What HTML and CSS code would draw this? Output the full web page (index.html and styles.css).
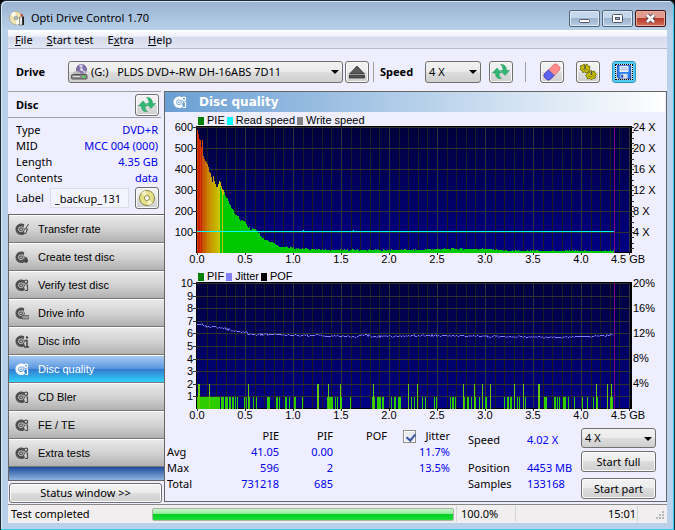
FILE: index.html
```
<!DOCTYPE html>
<html lang="en">
  <head>
    <meta charset="UTF-8" />
    <meta name="viewport" content="width=device-width, initial-scale=1.0" />
    <title>Opti Drive Control 1.70</title>
    <link rel="stylesheet" href="styles.css" />
  </head>

  <body>
    <!-- Shared icons -->
    <svg class="sprite" aria-hidden="true">
      <symbol id="disc" viewBox="0 0 14 14">
        <path fill="currentColor" fill-rule="evenodd" d="M6.500 1.500C3 1.500.5 4 .5 7.300S3 13 6.300 13c1.500 0 2.700-.4 3.700-1.300L9 9.500l1-2.300-1.500-2L9.300 2.200A6 6 0 0 0 6.500 1.500zM6 4.600a2.700 2.700 0 1 1 0 5.400 2.700 2.700 0 0 1 0-5.400z" />
        <circle cx="6" cy="7.300" r="1.400" fill="none" stroke="currentColor" stroke-width="1.100" />
      </symbol>
      <symbol id="disc-gear" viewBox="0 0 14 14">
        <use href="#disc" />
        <circle cx="11" cy="3.800" r="1.700" fill="none" stroke="currentColor" stroke-width="1.300" />
        <path d="M10.500 7h2v5.500H10" fill="none" stroke="currentColor" stroke-width="1.200" />
      </symbol>
      <symbol id="refresh" viewBox="0 0 18 18">
        <path d="M.5 10L5 5l4.500 5H7c0 3 .6 4.200 2.500 5.500-4 .6-6-1.200-6-5.500z" fill="#31b872" stroke="#1d9257" stroke-width=".5" />
        <path d="M17.500 7.500L13 12.500 8.500 7.500H11c0-3-.8-4.500-2.500-5.900 3.600-.3 6 1.600 6 5.900z" fill="#31b872" stroke="#1d9257" stroke-width=".5" />
      </symbol>
    </svg>

    <div class="window">
      <header class="titlebar">
        <svg class="app-icon" viewBox="0 0 16 16" aria-hidden="true">
          <circle cx="7" cy="8" r="6.500" fill="#efe3b4" stroke="#a99c78" stroke-width=".7" />
          <path d="M7 8L1.500 4.500A6.500 6.500 0 0 1 6 1.600zM7 8l5.500 3.500A6.500 6.500 0 0 1 7 14.500z" fill="#fffdf2" />
          <circle cx="7" cy="8" r="1.800" fill="#a9c3df" stroke="#8a8266" stroke-width=".7" />
          <path d="M10.500 7h3v8h-3z" fill="#e9e9e9" stroke="#555" stroke-width=".6" />
          <path d="M13.200 6.500h1.800V15h-1.800z" fill="#222" />
          <path d="M12 3.500l2 1.500-1 2-1.500-1.500z" fill="#c23a2a" />
        </svg>
        <h1>Opti Drive Control 1.70</h1>
        <div class="caption-buttons">
          <button class="caption" aria-label="Minimize">
            <svg viewBox="0 0 28 15"><rect x="9.500" y="8.500" width="10" height="3" rx="1" fill="#fff" stroke="#535666" /></svg>
          </button>
          <button class="caption" aria-label="Maximize">
            <svg viewBox="0 0 28 15">
              <rect x="9.500" y="3.500" width="10" height="8" rx="1" fill="#fff" stroke="#535666" />
              <rect x="12.500" y="6.500" width="4" height="2" fill="#9db6d2" stroke="#535666" />
            </svg>
          </button>
          <button class="caption close" aria-label="Close">
            <svg viewBox="0 0 28 15">
              <path d="M11 4l7 7M18 4l-7 7" stroke="#5a4652" stroke-width="4.500" />
              <path d="M11 4l7 7M18 4l-7 7" stroke="#fff" stroke-width="2.600" />
            </svg>
          </button>
        </div>
      </header>

      <div class="client">
        <nav class="menubar">
          <a href="#file"><u>F</u>ile</a>
          <a href="#start"><u>S</u>tart test</a>
          <a href="#extra">E<u>x</u>tra</a>
          <a href="#help"><u>H</u>elp</a>
        </nav>

        <div class="toolbar">
          <label class="bold drive-label" for="drive">Drive</label>
          <span class="select drive-select">
            <svg class="drive-icon" viewBox="0 0 17 16" aria-hidden="true">
              <circle cx="10.500" cy="5.500" r="5" fill="#8474ad" stroke="#54477c" stroke-width=".7" />
              <path d="M10.500 5.500L8 1.200A5 5 0 0 1 12 .8zM10.500 5.500l4.500 2-1.500 2z" fill="#d3cbea" />
              <circle cx="10.500" cy="5.500" r="1.300" fill="#eee" />
              <path d="M3 7.500h5l2 2h4l2 1.500H1z" fill="#b9b9b9" />
              <rect x=".5" y="10.500" width="15.500" height="4.500" rx="1" fill="#8a8a8a" stroke="#555" />
              <path d="M2 12.500h7" stroke="#ddd" />
              <circle cx="12.800" cy="12.700" r="1.200" fill="#3bf03b" />
            </svg>
            <select id="drive">
              <option>(G:) &nbsp; PLDS DVD+-RW DH-16ABS 7D11</option>
            </select>
          </span>
          <button class="btn icon-btn" aria-label="Eject">
            <svg viewBox="0 0 18 16">
              <path d="M9 2l7.500 8h-15z" fill="#5a5a5a" stroke="#222" stroke-width=".7" />
              <rect x="1.500" y="11.500" width="15" height="2.500" fill="#555" stroke="#222" stroke-width=".7" />
            </svg>
          </button>
          <span class="separator"></span>
          <label class="bold speed-label" for="speed">Speed</label>
          <span class="select speed-select">
            <select id="speed">
              <option>4 X</option>
            </select>
          </span>
          <button class="btn icon-btn" aria-label="Refresh speed"><svg viewBox="0 0 18 18"><use href="#refresh" /></svg></button>
          <span class="separator wide"></span>
          <div class="tools">
            <button class="btn icon-btn" aria-label="Erase">
              <svg viewBox="0 0 18 18">
                <g transform="rotate(-45 9 9)">
                  <rect x="0" y="5" width="18" height="8" rx="3" fill="#ff8d8d" stroke="#d65a5a" stroke-width=".7" />
                  <path d="M3 5h5v8H3a3 3 0 0 1-3-3V8a3 3 0 0 1 3-3z" fill="#5d63f0" stroke="#3538b8" stroke-width=".7" />
                </g>
              </svg>
            </button>
            <button class="btn icon-btn" aria-label="Settings">
              <svg viewBox="0 0 18 18">
                <g fill="#c6bd00" stroke="#665f00" stroke-width=".8">
                  <path d="M5 1l1.500 1 1.500-1 1 2 2 .5-.5 2 .5 2.500-2 .5L7.500 10 5.500 9l-2 .5-.5-2L1 6.500 2 4.500 1 3l2-.5z" />
                  <path d="M12 7.500l1.500 1 2-.5.5 2 1.500 1.500-1.500 1.500.5 2-2.500.5-1.500 1.500-1.500-1.500-2.500.5-.5-2L6.500 12.500 8 11l.5-2 2 .5z" />
                </g>
                <path d="M6 2v4M12.500 8.500v3.500" stroke="#555" stroke-width="1.500" />
                <path d="M3.500 6q2.500 2.500 5 0M9.500 13q2.500 2 5-.5" fill="none" stroke="#8b8400" />
              </svg>
            </button>
            <button class="btn icon-btn focused" aria-label="Save">
              <svg viewBox="0 0 18 18">
                <path d="M1.500 1.500h15v15h-13l-2-2z" fill="#2d80ee" stroke="#1247b5" />
                <rect x="4" y="2" width="10" height="7" fill="#e8f0ff" />
                <path d="M5 4.500h8M5 6.500h8" stroke="#9fb5dd" />
                <rect x="5" y="11" width="8" height="5.500" fill="#d9dde5" />
                <rect x="6" y="12" width="2" height="3.500" fill="#1247b5" />
              </svg>
            </button>
          </div>
        </div>

        <div class="workspace">
          <aside class="sidebar">
            <div class="disc-head">
              <h2>Disc</h2>
              <button class="btn icon-btn" aria-label="Refresh disc"><svg viewBox="0 0 18 18"><use href="#refresh" /></svg></button>
            </div>
            <dl class="disc-info">
              <div><dt>Type</dt><dd>DVD+R</dd></div>
              <div><dt>MID</dt><dd>MCC 004 (000)</dd></div>
              <div><dt>Length</dt><dd>4.35 GB</dd></div>
              <div><dt>Contents</dt><dd>data</dd></div>
            </dl>
            <div class="label-row">
              <label for="disc-label">Label</label>
              <input id="disc-label" type="text" value="_backup_131" />
              <button class="btn icon-btn" aria-label="Edit label">
                <svg viewBox="0 0 18 18">
                  <circle cx="9" cy="9" r="7.500" fill="#e6e08a" stroke="#8d8842" />
                  <path d="M9 9L3.500 4A7.500 7.500 0 0 1 8 1.800zM9 9l5.500 5a7.500 7.500 0 0 1-4.500 2.300z" fill="#f8f6cc" />
                  <circle cx="9" cy="9" r="2.500" fill="#fff" stroke="#8d8842" />
                </svg>
              </button>
            </div>
            <nav class="tests">
              <button class="test"><svg viewBox="0 0 14 14"><use href="#disc" /><path d="M13.500 2l-3 5h2l-2 5" fill="none" stroke="#444" /></svg>Transfer rate</button>
              <button class="test"><svg viewBox="0 0 14 14"><use href="#disc" /><path d="M11 6.500q4 5 0 6.500-4-1.500 0-6.500z" fill="#444" /></svg>Create test disc</button>
              <button class="test"><svg viewBox="0 0 14 14"><use href="#disc-gear" /></svg>Verify test disc</button>
              <button class="test"><svg viewBox="0 0 14 14"><use href="#disc" /><path d="M7 9.500h7v3.500H7z" fill="#999" stroke="#555" stroke-width=".7" /></svg>Drive info</button>
              <button class="test"><svg viewBox="0 0 14 14"><use href="#disc" /><path d="M9.500 6.500h2.500v6M9 13h5" fill="none" stroke="#444" stroke-width="1.500" /><circle cx="12" cy="3.500" r="1.200" fill="#444" /></svg>Disc info</button>
              <button class="test active"><svg viewBox="0 0 14 14"><use href="#disc-gear" /></svg>Disc quality</button>
              <button class="test"><svg viewBox="0 0 14 14"><use href="#disc-gear" /></svg>CD Bler</button>
              <button class="test"><svg viewBox="0 0 14 14"><use href="#disc-gear" /></svg>FE / TE</button>
              <button class="test"><svg viewBox="0 0 14 14"><use href="#disc-gear" /></svg>Extra tests</button>
            </nav>
            <button class="btn status-window">Status window &gt;&gt;</button>
          </aside>

          <main class="panel">
            <div class="panel-head">
              <svg viewBox="0 0 14 14" aria-hidden="true"><use href="#disc-gear" /></svg>
              <h2>Disc quality</h2>
            </div>

            <ul class="legend">
              <li><i class="key green"></i>PIE</li>
              <li><i class="key cyan"></i>Read speed</li>
              <li><i class="key gray"></i>Write speed</li>
            </ul>
            <svg class="chart" id="pie-chart" viewBox="0 0 501 142" role="img" aria-label="PIE errors and read speed"></svg>

            <ul class="legend">
              <li><i class="key green"></i>PIF</li>
              <li><i class="key violet"></i>Jitter</li>
              <li><i class="key black"></i>POF</li>
            </ul>
            <svg class="chart" id="pif-chart" viewBox="0 0 501 142" role="img" aria-label="PIF errors and jitter"></svg>

            <div class="results">
              <table class="stats">
                <thead>
                  <tr>
                    <td></td>
                    <th>PIE</th>
                    <th>PIF</th>
                    <th>POF</th>
                    <th>
                      <span class="jitter"><input type="checkbox" id="jitter" checked /><label for="jitter">Jitter</label></span>
                    </th>
                  </tr>
                </thead>
                <tbody>
                  <tr><th>Avg</th><td>41.05</td><td>0.00</td><td></td><td>11.7%</td></tr>
                  <tr><th>Max</th><td>596</td><td>2</td><td></td><td>13.5%</td></tr>
                  <tr><th>Total</th><td>731218</td><td>685</td><td></td><td></td></tr>
                </tbody>
              </table>
              <dl class="progress-info">
                <dt>Speed</dt><dd>4.02 X</dd>
                <dt>Position</dt><dd>4453 MB</dd>
                <dt>Samples</dt><dd>133168</dd>
              </dl>
              <div class="actions">
                <span class="select">
                  <select aria-label="Test speed">
                    <option>4 X</option>
                  </select>
                </span>
                <button class="btn">Start full</button>
                <button class="btn">Start part</button>
              </div>
            </div>
          </main>
        </div>

        <footer class="statusbar">
          <span class="status-text">Test completed</span>
          <div class="progress" role="progressbar" aria-valuenow="100"></div>
          <span class="percent">100.0%</span>
          <span class="clock">15:01</span>
          <svg class="grip" viewBox="0 0 12 12" aria-hidden="true">
            <path d="M8 1h2v2H8zM5 4h2v2H5zM8 4h2v2H8zM2 7h2v2H2zM5 7h2v2H5zM8 7h2v2H8z" fill="#b8b8b8" />
          </svg>
        </footer>
      </div>
    </div>

    <script src="charts.js"></script>
  </body>
</html>
```
FILE: styles.css
```
* {
  box-sizing: border-box;
}

body {
  margin: 0;
  background: #000;
  color: #000;
  font-family: "Noto Sans", "Open Sans", sans-serif;
  font-size: 11px;
  line-height: 16px;
}

h1,
h2,
ul,
dl,
dd {
  margin: 0;
  padding: 0;
}

button,
select,
input {
  margin: 0;
  font: inherit;
  color: inherit;
}

.sprite {
  display: none;
}

/* Window frame */
.window {
  display: flex;
  flex-direction: column;
  min-height: 100vh;
  padding: 0 6px 7px;
  border: 1px solid #1c2a33;
  border-bottom-color: #000;
  border-radius: 6px 6px 0 0;
  background: linear-gradient(#98b2d0, #b9d1ea 30px);
  box-shadow: inset -1px -1px #35cbe8, inset 1px 1px #d9e7f5;
}

.titlebar {
  display: flex;
  align-items: center;
  height: 29px;
  padding: 5px 2px 0;
}

.titlebar h1 {
  flex: 1;
  font-size: 11px;
  font-weight: 400;
  margin-left: 6px;
}

.app-icon {
  width: 16px;
  height: 16px;
}

.caption-buttons {
  display: flex;
  gap: 2px;
}

.caption {
  width: 31px;
  height: 17px;
  padding: 0;
  border: 1px solid #52657f;
  border-radius: 2px;
  background: linear-gradient(#c5d7ea 45%, #9db4cf 50%, #b7cce4);
  box-shadow: inset 0 0 0 1px #dce8f5;
}

.caption svg {
  display: block;
  width: 28px;
  height: 15px;
}

.caption.close {
  border-color: #451318;
  background: linear-gradient(#df9c8e 45%, #b9392a 50%, #cf7058);
  box-shadow: inset 0 0 0 1px #e6aea2;
}

.client {
  flex: 1;
  display: flex;
  flex-direction: column;
  margin: 0 1px;
  background: #efeeff;
}

.menubar {
  display: flex;
  gap: 14px;
  height: 19px;
  padding: 2px 7px 0;
  border-bottom: 1px solid #b4b8c8;
  background: linear-gradient(#fff, #eef0f8 35%, #d5dbee 40%, #e2e6f4);
}

.menubar a {
  color: #000;
  text-decoration: none;
}

/* Controls */
.btn {
  padding: 0 6px;
  border: 1px solid #707070;
  border-radius: 3px;
  background: linear-gradient(#f3f3f3, #ececec 48%, #dddddd 50%, #cfcfcf);
  box-shadow: inset 0 0 0 1px #fafafa;
}

.icon-btn {
  flex: none;
  display: flex;
  align-items: center;
  justify-content: center;
  width: 24px;
  height: 22px;
  padding: 0;
}

.icon-btn svg {
  width: 18px;
  height: 18px;
}

.icon-btn.focused {
  border-color: #2a94c4;
  outline: 1px dotted #000;
  outline-offset: -4px;
  box-shadow: inset 0 0 0 2px #4fcdf2;
}

.icon-btn.focused svg {
  width: 16px;
  height: 16px;
}

.select {
  position: relative;
  display: block;
}

.select::after {
  content: "";
  position: absolute;
  right: 4px;
  top: 9px;
  border: 4px solid transparent;
  border-top-color: #000;
  border-bottom: 0;
  pointer-events: none;
}

.select select {
  display: block;
  appearance: none;
  width: 100%;
  height: 22px;
  padding: 0 14px 0 3px;
  border: 1px solid #707070;
  border-radius: 3px;
  background: linear-gradient(#f2f2f2, #ebebeb 48%, #dddddd 50%, #cfcfcf);
}

.bold {
  font-weight: 700;
}

/* Toolbar */
.toolbar {
  display: flex;
  align-items: center;
  height: 42px;
  padding: 4px 31px 0 8px;
}

.drive-label {
  width: 52px;
}

.drive-select {
  flex: 1;
}

.drive-select select {
  padding-left: 22px;
}

.drive-icon {
  position: absolute;
  left: 3px;
  top: 3px;
  width: 17px;
  height: 16px;
}

.toolbar > .icon-btn {
  margin-left: 2px;
}

.separator {
  width: 1px;
  height: 20px;
  margin: 0 6px 0 4px;
  background: #a0a0a0;
}

.separator.wide {
  margin: 0 14px 0 12px;
}

.speed-label {
  width: 45px;
}

.speed-select {
  width: 56px;
}

.speed-select + .icon-btn {
  margin-left: 8px;
}

.tools {
  display: flex;
  gap: 12px;
}

/* Sidebar */
.workspace {
  flex: 1;
  display: flex;
}

.sidebar {
  display: flex;
  flex-direction: column;
  width: 156px;
  flex: none;
}

.disc-head {
  display: flex;
  align-items: center;
  justify-content: space-between;
  height: 27px;
  margin-right: 3px;
  padding: 0 2px 0 8px;
  border-top: 1px solid #a0a0a0;
  border-bottom: 1px solid #a0a0a0;
}

.disc-head h2 {
  font-size: 11px;
}

.disc-info {
  padding: 4px 6px 0 8px;
}

.disc-info div {
  display: flex;
  justify-content: space-between;
}

dd,
.stats tbody td {
  color: #0000f0;
}

.label-row {
  display: flex;
  align-items: center;
  gap: 6px;
  height: 28px;
  padding: 0 5px 4px 8px;
}

.label-row input {
  flex: 1;
  min-width: 0;
  height: 20px;
  padding: 0 4px;
  border: 1px solid #dcdce8;
  background: #f4f4ff;
}

.tests {
  display: flex;
  flex-direction: column;
  padding-bottom: 13px;
  border: 1px solid #666;
  border-right: 0;
  background: linear-gradient(#1c4a9c, #8fb4dd) bottom / 100% 13px no-repeat;
}

.test {
  display: flex;
  align-items: center;
  gap: 9px;
  height: 28px;
  padding: 0 6px;
  border: 0;
  border-top: 1px solid #fff;
  border-bottom: 1px solid #787878;
  background: linear-gradient(#e9e9e9, #d2d2d2 50%, #b1b1b1);
  font-family: "Liberation Sans", Arial, sans-serif;
  text-align: left;
}

.test svg {
  width: 14px;
  height: 14px;
  color: #505050;
}

.test.active {
  background: linear-gradient(#a6c9f2, #5b98e2 48%, #3478cc 50%, #2fd0fa);
  color: #fff;
}

.test.active svg {
  color: #fff;
}

.status-window {
  height: 20px;
  margin: 2px 2px 1px 1px;
}

/* Main panel */
.panel {
  flex: 1;
  min-width: 0;
  margin-bottom: 2px;
  border: 1px solid #666;
  font-family: "Liberation Sans", Arial, sans-serif;
}

.panel-head {
  display: flex;
  align-items: center;
  gap: 12px;
  height: 20px;
  margin-right: 1px;
  padding-left: 8px;
  background: linear-gradient(90deg, #6a9fd4, #fff);
  color: #fff;
}

.panel-head svg {
  width: 14px;
  height: 14px;
}

.panel-head h2 {
  font-family: "DejaVu Sans", sans-serif;
  font-size: 12px;
}

.legend {
  display: flex;
  gap: 2px;
  height: 11px;
  margin-top: 3px;
  padding-left: 33px;
  list-style: none;
  line-height: 11px;
}

.legend li {
  display: flex;
  align-items: center;
  gap: 3px;
}

.key {
  width: 6px;
  height: 8px;
}

.green {
  background: #008000;
}

.cyan {
  background: #00ffff;
}

.gray {
  background: #808080;
}

.violet {
  background: #8080ff;
}

.black {
  background: #000;
}

.chart {
  display: block;
  width: 100%;
  overflow: visible;
}

.chart text {
  font-size: 11px;
  fill: #000;
}

.results {
  display: flex;
  align-items: flex-start;
  padding: 4px 10px 0 2px;
  font-family: "Noto Sans", "Open Sans", sans-serif;
}

.stats {
  width: 283px;
  border-collapse: collapse;
  table-layout: fixed;
  text-align: right;
}

.stats th,
.stats td {
  width: 54px;
  padding: 0;
  font-weight: 400;
}

.stats tbody th {
  text-align: left;
}

.stats th:first-child,
.stats td:first-child {
  width: 58px;
}

.stats th:last-child,
.stats td:last-child {
  width: 63px;
}

.jitter {
  display: flex;
  align-items: center;
  justify-content: flex-end;
  gap: 9px;
}

.jitter input {
  appearance: none;
  position: relative;
  width: 13px;
  height: 13px;
  border: 1px solid #8e8f8f;
  background: #e8eaf0;
  box-shadow: inset 0 0 0 1px #fff;
}

.jitter input:checked::after {
  content: "";
  position: absolute;
  left: 4px;
  top: 1px;
  width: 4px;
  height: 7px;
  border: solid #3b55a0;
  border-width: 0 2px 2px 0;
  transform: rotate(40deg);
}

.progress-info {
  flex: 1;
  display: grid;
  grid-template-columns: 59px 1fr;
  grid-template-rows: 28px 16px 16px;
  padding: 4px 0 0 18px;
}

.actions {
  display: flex;
  flex-direction: column;
  gap: 3px;
  width: 75px;
}

.actions select {
  height: 20px;
}

.actions .btn {
  height: 21px;
}

.actions .btn:last-child {
  margin-top: 3px;
}

/* Status bar */
.statusbar {
  display: flex;
  align-items: center;
  height: 19px;
  padding-left: 3px;
  border-top: 1px solid #888;
  background: #f0eeee;
}

.status-text {
  width: 141px;
}

.progress {
  flex: 1;
  height: 13px;
  border: 1px solid #a5b5a5;
  border-radius: 2px;
  background: linear-gradient(#c8f5cc, #8eea98 45%, #04cf22 50%, #1ddd3a);
}

.percent {
  width: 60px;
  margin-left: 2px;
  padding-left: 4px;
  border-left: 1px solid #d5d5d5;
  border-right: 1px solid #d5d5d5;
}

.clock {
  width: 122px;
  padding-right: 1px;
  border-right: 1px solid #d5d5d5;
  text-align: right;
}

.grip {
  width: 12px;
  height: 12px;
  margin: 4px 1px 0 16px;
}
```
FILE: charts.js
```
const SVG_NS = "http://www.w3.org/2000/svg";
const LEFT = 32;
const TOP = 1;
const WIDTH = 433;
const HEIGHT = 126;
const GB = 96; // pixels per gigabyte

function add(parent, name, attrs, text) {
  const node = document.createElementNS(SVG_NS, name);
  for (const key in attrs) node.setAttribute(key, attrs[key]);
  if (text) node.textContent = text;
  parent.appendChild(node);
  return node;
}

function rect(svg, x, y, width, height, fill) {
  add(svg, "rect", { x, y, width, height, fill });
}

// Repeatable noise in the range 0..1
function noise(i) {
  const n = Math.sin(i * 12.9898) * 43758.5453;
  return n - Math.floor(n);
}

// Linear interpolation over [x, y] points
function valueAt(points, x) {
  for (let i = 1; i < points.length; i++) {
    const [x0, y0] = points[i - 1];
    const [x1, y1] = points[i];
    if (x <= x1) return y0 + ((y1 - y0) * (x - x0)) / (x1 - x0);
  }
  return points[points.length - 1][1];
}

function drawGrid(svg, rows) {
  const id = svg.id + "-bg";
  const gradient = add(svg, "linearGradient", { id, x2: 0, y2: 1 });
  add(gradient, "stop", { offset: 0, "stop-color": "#00003c" });
  add(gradient, "stop", { offset: 1, "stop-color": "#000084" });
  rect(svg, LEFT - 1, TOP - 1, WIDTH + 3, HEIGHT + 1, "#000");
  rect(svg, LEFT, TOP, WIDTH, HEIGHT - 1, `url(#${id})`);

  for (let i = 1; i <= 45; i++) {
    const x = LEFT + Math.round((i * GB) / 10);
    rect(svg, x, TOP, 1, HEIGHT - 1, i % 5 ? "#1c1c24" : "#333338");
  }
  for (let i = 0; i < rows; i++) {
    rect(svg, LEFT, TOP + Math.round((i * HEIGHT) / rows), WIDTH, 1, "#303030");
  }
  for (let i = 0; i <= 9; i++) {
    const x = LEFT + i * 48;
    const label = (i / 2).toFixed(1) + (i === 9 ? " GB" : "");
    rect(svg, x, TOP + HEIGHT, 1, 2, "#333");
    add(svg, "text", { x: i === 9 ? x - 1 : x, y: 137, "text-anchor": "middle" }, label);
  }
}

function leftAxis(svg, labels) {
  labels.forEach((label, i) => {
    const y = TOP + Math.round((i * HEIGHT) / labels.length);
    rect(svg, LEFT - 4, y, 4, 1, "#333");
    add(svg, "text", { x: LEFT - 4, y: y + 4, "text-anchor": "end" }, label);
  });
}

function rightAxis(svg, labels, step) {
  labels.forEach((label, i) => {
    add(svg, "text", { x: LEFT + WIDTH + 3, y: TOP + Math.round(i * step) + 4 }, label);
  });
}

function drawPie() {
  const svg = document.getElementById("pie-chart");
  drawGrid(svg, 6);
  leftAxis(svg, ["600", "500", "400", "300", "200", "100"]);
  for (let i = 0; i < 24; i++) {
    rect(svg, LEFT + WIDTH + 1, TOP + Math.round(i * 5.25), 3, 1, "#333");
  }
  rightAxis(svg, ["24 X", "20 X", "16 X", "12 X", "8 X", "4 X"], 21);

  // Bar height in pixels by position
  const profile = [
    [0, 124], [1, 118], [3, 113], [4, 106], [5, 113], [6, 97], [8, 93],
    [10, 88], [12, 82], [15, 71], [16, 76], [18, 69], [20, 65], [22, 72],
    [23, 71], [25, 65], [27, 62], [29, 55], [32, 50], [34, 46], [37, 39],
    [40, 37], [43, 33], [48, 32], [50, 28], [53, 23], [58, 25], [62, 19],
    [67, 14], [72, 12], [77, 10], [81, 7], [95, 5], [128, 3], [220, 3],
    [240, 4], [290, 4], [310, 2], [417, 2],
  ];
  for (let x = 0; x < 417; x++) {
    const spread = x < 60 ? 3 : x < 90 ? 2 : 1.4;
    const h = Math.max(2, Math.round(valueAt(profile, x) + (noise(x) - 0.5) * spread));
    let color = "#00c800";
    if (x < 5) color = x % 3 ? "#c82300" : "#d43c00";
    else if (x < 23 || x === 25) {
      const g = Math.round(valueAt([[5, 80], [12, 140], [22, 200]], x) + noise(x) * 16 - 8);
      color = `rgb(200, ${g}, 0)`;
    }
    rect(svg, LEFT + x, TOP + HEIGHT - h, 1, h, color);
    if (x === 23 || x === 24 || x === 26) rect(svg, LEFT + x, TOP + HEIGHT - h, 1, 5, "#c8b400");
  }

  rect(svg, LEFT, 105, 417, 1, "#00ffff");
  rect(svg, LEFT + 106, 104, 1, 1, "#00ffff");
  rect(svg, LEFT + 156, 104, 1, 1, "#00ffff");
  rect(svg, LEFT + 417, TOP, 1, HEIGHT, "#800080");
}

function drawPif() {
  const svg = document.getElementById("pif-chart");
  drawGrid(svg, 10);
  leftAxis(svg, ["10", "9", "8", "7", "6", "5", "4", "3", "2", "1"]);
  rightAxis(svg, ["20%", "16%", "12%", "8%", "4%"], 25);

  // Runs of PIF errors: [start, width]
  const single = [
    [0, 23], [24, 3], [28, 3], [32, 2], [35, 2], [38, 1], [40, 1], [47, 1],
    [49, 1], [51, 2], [56, 1], [59, 1], [70, 3], [79, 2], [82, 1], [88, 2],
    [92, 1], [97, 2], [105, 1], [120, 2], [130, 6], [138, 1], [140, 1],
    [143, 2], [153, 1], [175, 3], [180, 4], [185, 2], [194, 1], [197, 2],
    [201, 3], [214, 1], [217, 1], [225, 1], [228, 1], [237, 1], [239, 1],
    [253, 1], [255, 2], [258, 1], [266, 2], [270, 2], [274, 1], [277, 2],
    [282, 1], [285, 1], [288, 2], [307, 1], [310, 2], [313, 2], [317, 1],
    [320, 1], [322, 1], [328, 1], [341, 2], [347, 3], [357, 2], [360, 1],
    [362, 1], [366, 3], [371, 1], [377, 1], [385, 1], [390, 1], [396, 1],
    [399, 2], [410, 1], [413, 3],
  ];
  const double = [
    [1, 2], [12, 1], [51, 1], [120, 2], [131, 1], [143, 1], [176, 1],
    [211, 1], [220, 1], [266, 1], [277, 1], [285, 1], [293, 1], [317, 1],
    [326, 1], [341, 2], [399, 1], [410, 1], [414, 1],
  ];
  single.forEach(([x, w]) => rect(svg, LEFT + x, 115, w, 12, "#2ccc00"));
  double.forEach(([x, w]) => rect(svg, LEFT + x, 102, w, 25, "#62c800"));

  const jitter = [
    [0, 42], [5, 42], [10, 44], [23, 45], [31, 47], [38, 49], [50, 50],
    [53, 52], [75, 52], [110, 53], [160, 54], [168, 52], [175, 54],
    [235, 53], [300, 54], [360, 55], [400, 54], [408, 53], [417, 52],
  ];
  let points = "";
  for (let x = 0; x < 417; x++) {
    const y = Math.round(valueAt(jitter, x) + (noise(x + 500) - 0.5) * 1.8);
    points += `${LEFT + x},${y + 0.5} `;
  }
  add(svg, "polyline", { points, fill: "none", stroke: "#8080ff" });
  rect(svg, LEFT + 417, TOP, 1, HEIGHT, "#800080");
}

drawPie();
drawPif();
```
